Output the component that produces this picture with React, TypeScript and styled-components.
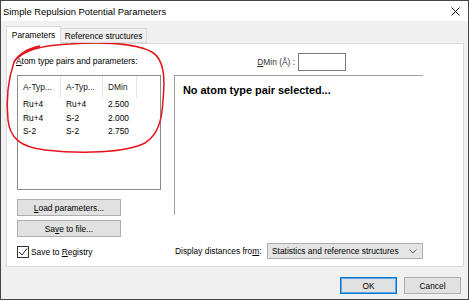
import styled, { createGlobalStyle } from "styled-components";

const GlobalStyle = createGlobalStyle`
    html, body {
        margin: 0;
        padding: 0;
        background: #ffffff;
    }
    body {
        font-family: "Liberation Sans", Arial, sans-serif;
        font-size: 8.4px;
        color: #000000;
    }
    * {
        box-sizing: border-box;
    }
`;

const WindowStyled = styled.div`
    position: relative;
    width: 469px;
    height: 300px;
    border: 1px solid #454545;
    background-color: #f0f0f0;
    display: flex;
    flex-direction: column;
`;

const TitleBarStyled = styled.div`
    height: 20px;
    flex: 0 0 20px;
    background-color: #ffffff;
    display: flex;
    align-items: center;
    justify-content: space-between;
    padding: 0 8px 0 2px;
    font-size: 9.4px;
    color: #000000;
`;

const BodyStyled = styled.div`
    flex: 1;
    display: flex;
    flex-direction: column;
    padding: 5px 4px 0 5px;
`;

const TabStripStyled = styled.div`
    display: flex;
    align-items: flex-end;
    height: 18px;
    margin-bottom: -1px;
    position: relative;
    z-index: 1;
`;

const TabStyled = styled.div<{ active?: boolean }>`
    display: flex;
    align-items: center;
    justify-content: center;
    width: ${({ active }) => (active ? "55px" : "86px")};
    height: ${({ active }) => (active ? "18px" : "15px")};
    margin-bottom: ${({ active }) => (active ? "0" : "1px")};
    background-color: ${({ active }) => (active ? "#ffffff" : "#f0f0f0")};
    border: 1px solid #d9d9d9;
    border-bottom: ${({ active }) => (active ? "none" : "1px solid #d9d9d9")};
    border-left: ${({ active }) => (active ? "1px solid #d9d9d9" : "none")};
    padding-bottom: ${({ active }) => (active ? "2px" : "0")};
`;

const PanelStyled = styled.div`
    width: 458px;
    height: 224px;
    background-color: #ffffff;
    border: 1px solid #d9d9d9;
    display: flex;
    gap: 13px;
    padding: 9px 0 0 10px;
`;

const LeftColumnStyled = styled.div`
    width: 144px;
    display: flex;
    flex-direction: column;
`;

const RightColumnStyled = styled.div`
    width: 249px;
    display: flex;
    flex-direction: column;
`;

const GroupLabelStyled = styled.div`
    height: 11px;
    line-height: 11px;
    margin: 3px 0 0 -1px;
`;

const ListBoxStyled = styled.div`
    margin-top: 8px;
    height: 115px;
    border: 1px solid #8c8c8c;
    background-color: #ffffff;
`;

const ListRowStyled = styled.div<{ header?: boolean }>`
    display: grid;
    grid-template-columns: 43px 42px 34px;
    height: ${({ header }) => (header ? "22px" : "13.5px")};
    line-height: ${({ header }) => (header ? "22px" : "13.5px")};
    margin-top: ${({ header }) => (header ? "0" : "0")};
`;

const ListCellStyled = styled.div<{ header?: boolean }>`
    padding-left: 5px;
    white-space: nowrap;
    overflow: hidden;
    color: ${({ header }) => (header ? "#1a1a1a" : "#000000")};
    border-right: ${({ header }) => (header ? "1px solid #e5e5e5" : "none")};
`;

const PushButtonStyled = styled.div<{ primary?: boolean; width?: number }>`
    width: ${({ width }) => width ?? 104}px;
    height: 17px;
    display: flex;
    align-items: center;
    justify-content: center;
    background-color: #e1e1e1;
    border: 1px solid ${({ primary }) => (primary ? "#0078d7" : "#adadad")};
    box-shadow: ${({ primary }) => (primary ? "inset 0 0 0 1px #5ea8e6" : "none")};
`;

const ButtonStackStyled = styled.div`
    margin-top: 9px;
    display: flex;
    flex-direction: column;
    gap: 4px;
`;

const CheckRowStyled = styled.div`
    margin-top: 9px;
    height: 12px;
    display: flex;
    align-items: center;
    gap: 2px;
`;

const CheckBoxStyled = styled.div`
    width: 12px;
    height: 12px;
    border: 1px solid #333333;
    background-color: #ffffff;
    display: flex;
    align-items: center;
    justify-content: center;
`;

const DMinRowStyled = styled.div`
    height: 18px;
    display: flex;
    align-items: center;
    justify-content: flex-end;
    gap: 3px;
    padding-right: 77px;
    color: #333333;
`;

const TextInputStyled = styled.div`
    width: 48px;
    height: 18px;
    border: 1px solid #7a7a7a;
    background-color: #ffffff;
`;

const InfoFrameStyled = styled.div`
    margin-top: 4px;
    height: 140px;
    border-top: 1px solid #a0a0a0;
    border-left: 1px solid #a0a0a0;
    padding: 8px 0 0 8px;
    font-size: 10.9px;
    font-weight: bold;
    line-height: 13px;
`;

const DisplayRowStyled = styled.div`
    margin-top: 28px;
    height: 16px;
    display: flex;
    align-items: center;
    padding-left: 1px;
`;

const ComboStyled = styled.div`
    margin-left: auto;
    width: 156px;
    height: 16px;
    background-color: #e5e5e5;
    border: 1px solid #acacac;
    display: flex;
    align-items: center;
    justify-content: space-between;
    padding: 0 5px 0 4px;
`;

const FooterStyled = styled.div`
    display: flex;
    justify-content: flex-end;
    gap: 7px;
    padding: 10px 3px 0 0;
`;

const AnnotationStyled = styled.svg`
    position: absolute;
    top: -1px;
    left: -1px;
    pointer-events: none;
`;

const Key = styled.span`
    text-decoration: underline;
`;

export default function App() {
    return (
        <>
            <GlobalStyle />
            <WindowStyled>
                <TitleBarStyled>
                    <span>Simple Repulsion Potential Parameters</span>
                    <svg width="9" height="9" viewBox="0 0 9 9">
                        <path d="M0.5 0.5 L8.5 8.5 M8.5 0.5 L0.5 8.5" stroke="#111" strokeWidth="1" />
                    </svg>
                </TitleBarStyled>
                <BodyStyled>
                    <TabStripStyled>
                        <TabStyled active>Parameters</TabStyled>
                        <TabStyled>Reference structures</TabStyled>
                    </TabStripStyled>
                    <PanelStyled>
                        <LeftColumnStyled>
                            <GroupLabelStyled>
                                <Key>A</Key>tom type pairs and parameters:
                            </GroupLabelStyled>
                            <ListBoxStyled>
                                <ListRowStyled header>
                                    <ListCellStyled header>A-Typ...</ListCellStyled>
                                    <ListCellStyled header>A-Typ...</ListCellStyled>
                                    <ListCellStyled header>DMin</ListCellStyled>
                                </ListRowStyled>
                                {[
                                    ["Ru+4", "Ru+4", "2.500"],
                                    ["Ru+4", "S-2", "2.000"],
                                    ["S-2", "S-2", "2.750"],
                                ].map((row, i) => (
                                    <ListRowStyled key={i}>
                                        {row.map((cell, j) => (
                                            <ListCellStyled key={j}>{cell}</ListCellStyled>
                                        ))}
                                    </ListRowStyled>
                                ))}
                            </ListBoxStyled>
                            <ButtonStackStyled>
                                <PushButtonStyled>
                                    <span>
                                        <Key>L</Key>oad parameters...
                                    </span>
                                </PushButtonStyled>
                                <PushButtonStyled>
                                    <span>
                                        Sa<Key>v</Key>e to file...
                                    </span>
                                </PushButtonStyled>
                            </ButtonStackStyled>
                            <CheckRowStyled>
                                <CheckBoxStyled>
                                    <svg width="10" height="10" viewBox="0 0 10 10">
                                        <path d="M1 5 L4 8 L9 1.5" stroke="#222" strokeWidth="1" fill="none" />
                                    </svg>
                                </CheckBoxStyled>
                                <span>
                                    Save to <Key>R</Key>egistry
                                </span>
                            </CheckRowStyled>
                        </LeftColumnStyled>
                        <RightColumnStyled>
                            <DMinRowStyled>
                                <span>
                                    <Key>D</Key>Min (Å) :
                                </span>
                                <TextInputStyled />
                            </DMinRowStyled>
                            <InfoFrameStyled>No atom type pair selected...</InfoFrameStyled>
                            <DisplayRowStyled>
                                <span>
                                    Display distances fro<Key>m</Key>:
                                </span>
                                <ComboStyled>
                                    <span>Statistics and reference structures</span>
                                    <svg width="8" height="5" viewBox="0 0 8 5">
                                        <path d="M0.5 0.5 L4 4 L7.5 0.5" stroke="#666" strokeWidth="1" fill="none" />
                                    </svg>
                                </ComboStyled>
                            </DisplayRowStyled>
                        </RightColumnStyled>
                    </PanelStyled>
                    <FooterStyled>
                        <PushButtonStyled primary width={57}>OK</PushButtonStyled>
                        <PushButtonStyled width={57}>Cancel</PushButtonStyled>
                    </FooterStyled>
                </BodyStyled>
                <AnnotationStyled width="469" height="301" viewBox="0 0 469 301">
                    <path
                        d="M14 62 C22 50 45 45 70 44 C100 42 135 43 152 52 C165 60 165 80 163 100 C162 120 158 135 145 143 C125 153 80 154 45 150 C20 147 10 138 8 120 C6 100 8 80 14 62 C20 52 30 48 40 46"
                        stroke="#e3151c"
                        strokeWidth="1.5"
                        fill="none"
                    />
                </AnnotationStyled>
            </WindowStyled>
        </>
    );
}
